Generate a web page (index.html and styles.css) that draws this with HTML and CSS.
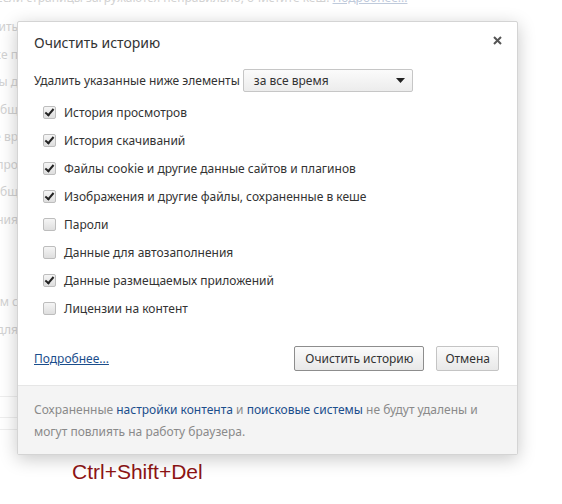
FILE: index.html
```html
<!DOCTYPE html>
<html lang="ru">
<head>
<meta charset="utf-8">
<title>Очистить историю</title>
<link rel="stylesheet" href="styles.css">
</head>
<body>
<div class="page">
  <div class="top-line">Если страницы загружаются неправильно, очистите кеш. <span class="top-link">Подробнее...</span></div>
  <div class="side">
    <div class="frag">Отобразить</div>
    <div class="frag">Разрешить все п</div>
    <div class="frag">Вопросы д</div>
    <div class="frag">Сообщ</div>
    <div class="frag">Все вр</div>
    <div class="frag">Упро</div>
    <div class="frag">Сообщ</div>
    <div class="frag">Изменения</div>
    <div class="frag">&nbsp;</div>
    <div class="frag">&nbsp;</div>
    <div class="frag">Ваш прием с</div>
    <div class="frag">Ключ для</div>
    <div class="rule r1"></div>
    <div class="rule r2"></div>
    <div class="rule r3"></div>
  </div>
  <div class="hotkey">Ctrl+Shift+Del</div>
</div>

<div class="dialog">
  <div class="dialog-body">
    <div class="title-row">
      <h1 class="title">Очистить историю</h1>
      <svg class="close" width="9" height="9" viewBox="0 0 9 9"><path d="M1 1 L8 8 M8 1 L1 8" stroke="#555" stroke-width="2" fill="none"/></svg>
    </div>
    <div class="range-row">
      <span>Удалить указанные ниже элементы</span>
      <div class="select"><span>за все время</span><svg width="9" height="5" viewBox="0 0 9 5"><path d="M0 0 H9 L4.5 5 Z" fill="#222"/></svg></div>
    </div>
    <ul class="options">
      <li><span class="cb on"></span>История просмотров</li>
      <li><span class="cb on"></span>История скачиваний</li>
      <li><span class="cb on"></span>Файлы cookie и другие данные сайтов и плагинов</li>
      <li><span class="cb on"></span>Изображения и другие файлы, сохраненные в кеше</li>
      <li><span class="cb"></span>Пароли</li>
      <li><span class="cb"></span>Данные для автозаполнения</li>
      <li><span class="cb on"></span>Данные размещаемых приложений</li>
      <li><span class="cb"></span>Лицензии на контент</li>
    </ul>
    <div class="action-row">
      <a class="more" href="#">Подробнее...</a>
      <div class="buttons">
        <button class="btn primary">Очистить историю</button>
        <button class="btn">Отмена</button>
      </div>
    </div>
  </div>
  <div class="dialog-footer">
    Сохраненные <a href="#">настройки контента</a> и <a href="#">поисковые системы</a> не будут удалены и могут повлиять на работу браузера.
  </div>
</div>
</body>
</html>
```

FILE: styles.css
```css
html, body {
  margin: 0;
  padding: 0;
  background: #fff;
  width: 562px;
  height: 504px;
  overflow: hidden;
}

body {
  position: relative;
  font-family: "Noto Sans", "Open Sans", sans-serif;
}

.page {
  color: #d2d2d2;
  font-size: 12px;
}

.top-line {
  margin-top: -10px;
  margin-left: -4px;
  height: 16px;
  line-height: 16px;
  white-space: nowrap;
}

.top-link {
  color: #bfcadb;
  text-decoration: underline;
}

.side {
  margin-left: -40px;
  width: 100px;
  height: 454px;
  padding-top: 7px;
  box-sizing: border-box;
}

.frag {
  height: 27.5px;
  line-height: 27.5px;
  white-space: nowrap;
  text-align: right;
  width: 58px;
  overflow: hidden;
  direction: rtl;
}

.rule {
  width: 60px;
  border-top: 1px solid #eeeeee;
}

.r1 { margin-top: 53px; }
.r2 { margin-top: 20px; }
.r3 { margin-top: 11px; }

.hotkey {
  margin-left: 72px;
  font-family: "Liberation Sans", Arial, sans-serif;
  font-size: 21px;
  line-height: 24px;
  color: #8e1414;
}

.dialog {
  position: absolute;
  left: 17px;
  top: 21px;
  width: 499px;
  height: 432px;
  background: #fff;
  border: 1px solid #d4d4d4;
  border-radius: 2px;
  box-shadow: 0 4px 18px rgba(0, 0, 0, 0.22);
  color: #333;
  font-size: 12px;
  display: flex;
  flex-direction: column;
}

.dialog-body {
  padding: 11px 18px 0 16px;
  flex: 1;
}

.title-row {
  display: flex;
  justify-content: space-between;
  align-items: flex-start;
}

.title {
  margin: 0;
  font-size: 14px;
  font-weight: normal;
  line-height: 20px;
  color: #333;
}

.close {
  margin-top: 3px;
  margin-right: -3px;
}

.range-row {
  display: flex;
  align-items: center;
  margin-top: 16px;
  height: 23px;
}

.select {
  margin-left: 3px;
  width: 151px;
  height: 21px;
  border: 1px solid #c6c6c6;
  border-radius: 2px;
  background: linear-gradient(#fbfbfb, #ececec);
  display: flex;
  align-items: center;
  justify-content: space-between;
  padding: 0 7px 0 10px;
}

.options {
  list-style: none;
  margin: 6px 0 0 9px;
  padding: 0;
}

.options li {
  height: 28px;
  display: flex;
  align-items: center;
}

.cb {
  width: 11px;
  height: 11px;
  border: 1px solid #bdbdbd;
  border-radius: 2px;
  background: linear-gradient(#f5f5f5, #dedede);
  margin-right: 8px;
  position: relative;
}

.cb.on::after {
  content: "";
  position: absolute;
  left: 3px;
  top: 0px;
  width: 3px;
  height: 7px;
  border-right: 2.5px solid #222;
  border-bottom: 2.5px solid #222;
  transform: rotate(40deg);
}

.action-row {
  display: flex;
  align-items: center;
  justify-content: space-between;
  margin-top: 24px;
}

.more {
  color: #1b4e8c;
  text-decoration: underline;
}

.buttons {
  display: flex;
  gap: 12px;
}

.btn {
  font-family: inherit;
  font-size: 12px;
  color: #333;
  height: 25px;
  padding: 0 8px;
  border: 1px solid #c4c4c4;
  border-radius: 2px;
  background: linear-gradient(#fbfbfb, #e8e8e8);
}

.btn.primary {
  border-color: #8d8d8d;
  padding: 0 10px;
}

.dialog-footer {
  background: #f4f4f4;
  border-top: 1px solid #e6e6e6;
  height: 69px;
  box-sizing: border-box;
  padding: 13px 20px 0 16px;
  line-height: 22px;
  color: #8a8a8a;
  font-size: 12px;
}

.dialog-footer a {
  color: #1b4e8c;
  text-decoration: none;
}
```
